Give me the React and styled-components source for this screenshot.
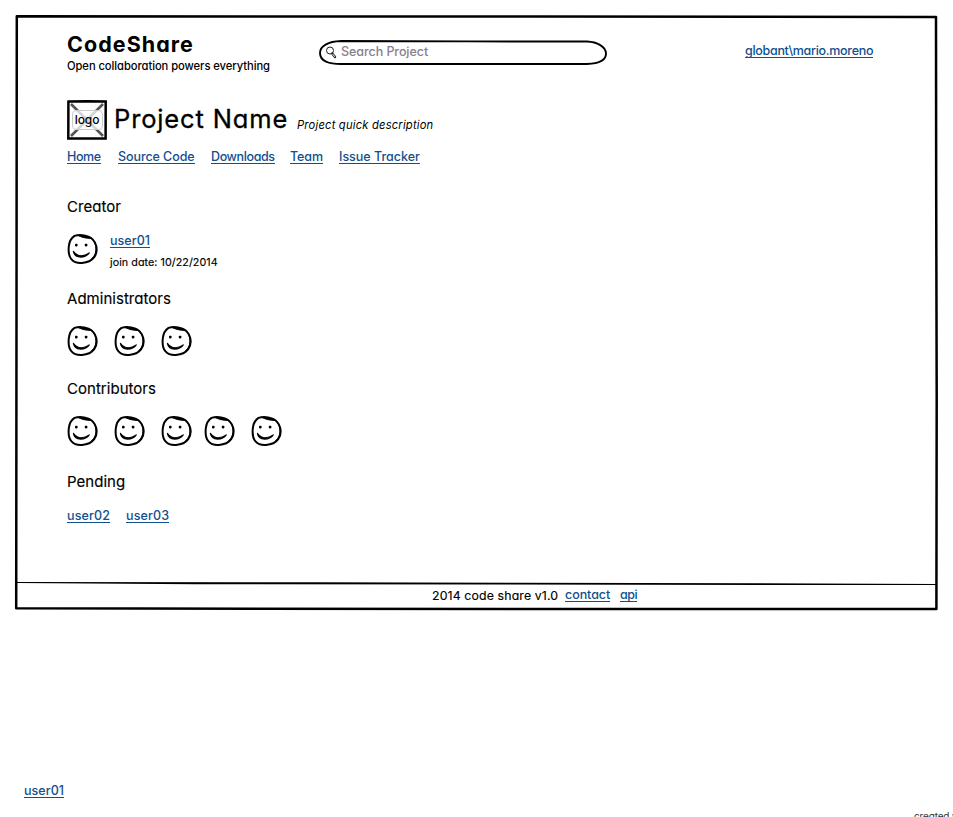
import React from 'react';
import styled, { createGlobalStyle } from 'styled-components';

const Global = createGlobalStyle`
  * { box-sizing: border-box; }
  html, body { margin: 0; background: #fff; overflow: hidden; }
  body {
    font-family: Inter, "Liberation Sans", sans-serif;
    font-feature-settings: "cv11";
    color: #000;
  }
`;

const Page = styled.div`
  display: flex;
  flex-direction: column;
  width: 953px;
  height: 817px;
  padding-top: 16px;
  overflow: hidden;
`;

const Panel = styled.main`
  position: relative;
  display: flex;
  flex-direction: column;
  flex: none;
  width: 921px;
  height: 593px;
  margin-left: 16px;
  padding-top: 15px;
`;

const Sketch = styled.svg`
  position: absolute;
  left: 0;
  top: 0;
  overflow: visible;
  pointer-events: none;
`;

const Header = styled.header`
  display: flex;
  align-items: flex-start;
  height: 69px;
  padding-left: 51px;
`;

const Brand = styled.div`
  width: 252px;
`;

const BrandName = styled.h1`
  height: 28px;
  margin: 0;
  font-size: 21.5px;
  font-weight: 700;
  line-height: 27px;
  letter-spacing: 1.05px;
`;

const Tagline = styled.p`
  margin: 0;
  font-size: 11.2px;
  font-weight: 500;
  line-height: 14px;
  letter-spacing: -0.06px;
  white-space: nowrap;
`;

const Search = styled.label`
  position: relative;
  display: flex;
  align-items: flex-start;
  width: 288px;
  height: 26px;
  margin: 9px 138px 0 0;
  padding: 6px 0 0 6px;
`;

const Placeholder = styled.span`
  margin: -2px 0 0 4px;
  font-size: 12.5px;
  font-weight: 500;
  line-height: 16px;
  letter-spacing: -0.06px;
  color: #85818c;
`;

const Link = styled.a`
  display: block;
  flex: none;
  width: ${p => p.$w}px;
  height: 16px;
  margin-top: ${p => p.$mt || 0}px;
  margin-right: ${p => p.$mr || 0}px;
  border-bottom: 1px solid #11508f;
  font-size: 12.5px;
  font-weight: 500;
  line-height: 18px;
  letter-spacing: ${p => (p.$ls || 0) - 0.06}px;
  white-space: nowrap;
  color: #11508f;
`;

const TitleRow = styled.div`
  display: flex;
  align-items: flex-start;
  height: 48px;
  padding-left: 51px;
`;

const Logo = styled.div`
  position: relative;
  display: flex;
  align-items: center;
  justify-content: center;
  width: 40px;
  height: 40px;
`;

const LogoLabel = styled.span`
  position: relative;
  width: 31px;
  height: 20px;
  border: 1px solid #ccc;
  border-radius: 4px;
  background: rgba(255, 255, 255, 0.75);
  font-size: 12px;
  font-weight: 500;
  line-height: 17px;
  letter-spacing: -0.1px;
  text-align: center;
`;

const ProjectName = styled.h2`
  width: 183px;
  margin: 3px 0 0 7px;
  font-size: 25.5px;
  font-weight: 400;
  line-height: 32px;
  letter-spacing: 0.86px;
  white-space: nowrap;
  -webkit-text-stroke: 0.3px #000;
`;

const Description = styled.p`
  margin: 18px 0 0;
  font-size: 11.2px;
  font-style: italic;
  font-weight: 400;
  line-height: 14px;
  letter-spacing: 0.2px;
`;

const Row = styled.div`
  display: flex;
  align-items: flex-start;
  gap: ${p => p.$gap || 0}px;
  height: ${p => p.$h}px;
  padding-left: 51px;
`;

const Heading = styled.h3`
  height: ${p => p.$h}px;
  margin: 0;
  padding-left: 51px;
  font-size: 15px;
  font-weight: 400;
  line-height: 22px;
  letter-spacing: 0.03px;
  -webkit-text-stroke: 0.15px #000;
`;

const FaceSvg = styled.svg`
  display: block;
  flex: none;
  margin-left: ${p => p.$ml || 0}px;
`;

const Member = styled.div`
  margin: -2px 0 0 12px;
`;

const JoinDate = styled.p`
  margin: 8px 0 0;
  font-size: 10.75px;
  font-weight: 400;
  line-height: 14px;
  letter-spacing: 0.05px;
  -webkit-text-stroke: 0.15px #000;
`;

const Footer = styled.footer`
  position: relative;
  display: flex;
  height: 27px;
  margin-top: auto;
  padding: 4px 0 0 416px;
`;

const Copyright = styled.span`
  width: 133px;
  padding-top: 1px;
  font-size: 12.3px;
  font-weight: 400;
  line-height: 18px;
  letter-spacing: 0.14px;
  white-space: nowrap;
  -webkit-text-stroke: 0.15px #000;
`;

const Stray = styled.div`
  display: flex;
  flex-direction: column;
  padding: 173px 0 0 24px;
`;

const Credit = styled.p`
  width: 39px;
  margin: 12px 0 0 890px;
  font-size: 10px;
  line-height: 12px;
  letter-spacing: -0.15px;
  white-space: nowrap;
  overflow: hidden;
  color: #333;
`;

const Face = ({ ml }) => (
  <FaceSvg $ml={ml} width="31" height="31" viewBox="0 0 31 31" fill="none" stroke="#000" strokeLinecap="round" strokeLinejoin="round">
    <path strokeWidth="2" d="M7.5 1.9C4.2 4 2.3 8 1.8 12.5C1.2 18 2 22.5 4.5 25.4C7 28.3 11 29.3 15 29C20 28.7 24.6 26.8 27.2 23.2C29.6 19.8 30.2 15.5 29.1 11.5C27.9 7.5 25.5 4.4 21.5 2.7C17 1 11.5 .6 7.5 1.9Z" />
    <path strokeWidth="1" d="M27 7C28.6 10 29.4 14 28.7 18C28 21 26.4 23.6 24 25.4" />
    <path strokeWidth="1" d="M11 1.5C15 1.2 20 1.8 23 3.6L24 4.4C19 4.4 15 3.4 11 1.5Z" fill="#000" />
    <path strokeWidth="1.1" fill="#000" d="M6.4 17.4C8.5 20.5 11 21.9 14.5 21.8C17.5 21.6 19.8 20.5 22.3 18.9C20.4 21.6 17.5 23.1 13.6 23.1C10 23 7 21.2 6.4 17.4Z" />
    <rect x="8" y="9.8" width="2.6" height="2.6" rx=".8" fill="#000" stroke="none" />
    <rect x="17.8" y="9.8" width="2.6" height="2.6" rx=".8" fill="#000" stroke="none" />
  </FaceSvg>
);

export default function App() {
  return (
    <>
      <Global />
      <Page>
        <Panel>
          <Sketch width="921" height="593" fill="none" stroke="#000" strokeWidth="2.5" strokeLinejoin="round">
            <path d="M.8 .3L250 .6L520 .4L920 1L920.2 180L920.7 380L920.4 593L500 592.9L120 592.6L.2 592.2L.5 300Z" />
          </Sketch>

          <Header>
            <Brand>
              <BrandName>CodeShare</BrandName>
              <Tagline>Open collaboration powers everything</Tagline>
            </Brand>
            <Search>
              <Sketch width="288" height="26" fill="none" stroke="#000" strokeWidth="1.9" strokeLinejoin="round">
                <path d="M22 1L150 1.4L268 1.5C278 2 287 6.5 287 13.5C287 21 279 23.6 268 24L22 24C10 24 1 21.5 1 13C1 6 9 1.5 22 1Z" />
              </Sketch>
              <svg width="12" height="13" viewBox="0 0 12 13" fill="none" stroke="#222">
                <circle cx="5" cy="4.5" r="3.5" strokeWidth="1" />
                <path d="M7.2 7.5L10 11" strokeWidth="2.4" strokeLinecap="round" />
                <path d="M7.6 8L9.8 10.8" stroke="#fff" strokeWidth=".9" />
              </svg>
              <Placeholder>Search Project</Placeholder>
            </Search>
            <Link $w={128} $mt={11} $ls={-0.24}>globant\mario.moreno</Link>
          </Header>

          <TitleRow>
            <Logo>
              <Sketch width="40" height="40" fill="none">
                <path d="M4 4L36 36M36 4L4 36" stroke="#555" strokeWidth="2.6" />
                <path d="M1.4 1.6L20 1.2L38.7 1.4L38.6 38.5L20 38.6L1.3 38.4Z" stroke="#000" strokeWidth="2.5" />
              </Sketch>
              <LogoLabel>logo</LogoLabel>
            </Logo>
            <ProjectName>Project Name</ProjectName>
            <Description>Project quick description</Description>
          </TitleRow>

          <Row as="nav" $h={48} $gap={16}>
            <Link $w={34} $mr={1} $ls={-0.36}>Home</Link>
            <Link $w={77} $ls={-0.02}>Source Code</Link>
            <Link $w={64} $mr={-1} $ls={-0.32}>Downloads</Link>
            <Link $w={33} $ls={-0.06}>Team</Link>
            <Link $w={81} $ls={0.05}>Issue Tracker</Link>
          </Row>

          <Heading $h={38}>Creator</Heading>
          <Row $h={54}>
            <Face />
            <Member>
              <Link $w={40} $ls={0.12}>user01</Link>
              <JoinDate>join date: 10/22/2014</JoinDate>
            </Member>
          </Row>

          <Heading $h={38}>Administrators</Heading>
          <Row $h={52} $gap={16}>
            <Face /><Face /><Face />
          </Row>

          <Heading $h={38}>Contributors</Heading>
          <Row $h={55} $gap={16}>
            <Face /><Face /><Face /><Face ml={-4} /><Face />
          </Row>

          <Heading $h={36}>Pending</Heading>
          <Row $h={16} $gap={16}>
            <Link $w={43} $ls={0.2}>user02</Link>
            <Link $w={43} $ls={0.2}>user03</Link>
          </Row>

          <Footer>
            <Sketch width="921" height="4" fill="#000">
              <path d="M1 .1L300 .2L500 .7L800 1.4L921 2V3L780 3L480 2.6L180 2.2L1 1Z" />
            </Sketch>
            <Copyright>2014 code share v1.0</Copyright>
            <Link $w={45} $mr={10}>contact</Link>
            <Link $w={17} $ls={-0.45}>api</Link>
          </Footer>
        </Panel>

        <Stray>
          <Link $w={40} $ls={0.12}>user01</Link>
          <Credit>created with</Credit>
        </Stray>
      </Page>
    </>
  );
}
